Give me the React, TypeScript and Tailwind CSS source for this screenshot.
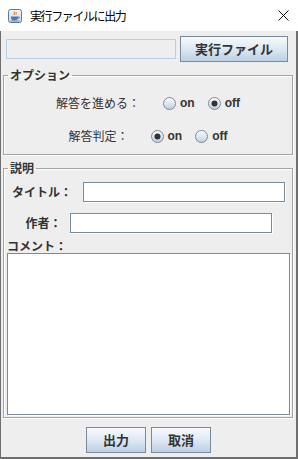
import React from "react"

function JavaIcon() {
  return (
    <svg width="14" height="14" viewBox="0 0 14 14" className="ml-[8px]">
      <defs>
        <linearGradient id="jbg" x1="0" y1="0" x2="0" y2="1">
          <stop offset="0" stopColor="#f4f7fb" />
          <stop offset="1" stopColor="#c9d7e6" />
        </linearGradient>
      </defs>
      <rect x="0.5" y="0.5" width="13" height="13" rx="2" fill="url(#jbg)" stroke="#5a7898" />
      <path d="M6 2.5c1.5 1-1 2 0.5 3.5M8 3c1 0.8-0.8 1.6 0.3 2.6" stroke="#e0642a" strokeWidth="1" fill="none" />
      <path d="M3 7.5h7v1.2c0 1.6-1.4 2.6-3.5 2.6S3 10.3 3 8.7z" fill="#4a78b0" />
      <path d="M10 8h1.2v1.2H10" stroke="#4a78b0" strokeWidth="0.8" fill="none" />
      <path d="M2.5 12h9" stroke="#4a78b0" strokeWidth="0.8" />
    </svg>
  )
}

function Radio({ checked, label }: { checked?: boolean; label: string }) {
  return (
    <div className="flex items-center gap-[4px]">
      <svg width="13" height="13" viewBox="0 0 13 13">
        <defs>
          <linearGradient id="rg" x1="0" y1="0" x2="0" y2="1">
            <stop offset="0" stopColor="#ffffff" />
            <stop offset="1" stopColor="#bccfe3" />
          </linearGradient>
        </defs>
        <circle cx="6.5" cy="6.5" r="6" fill="url(#rg)" stroke="#7d8a96" />
        {checked && <circle cx="6.5" cy="6.5" r="3" fill="#333333" />}
      </svg>
      <span className="font-['Liberation_Sans',sans-serif] font-bold text-[12px] leading-[14px] text-[#333333]">
        {label}
      </span>
    </div>
  )
}

function Button({ children, className }: { children: React.ReactNode; className?: string }) {
  return (
    <button
      className={
        "h-[26px] flex items-center justify-center border border-[#7a8a99] bg-linear-to-b from-[#f8fafd] via-[#dde8f3] to-[#bcd0e5] text-[13px] leading-[16px] font-bold text-[#333333] " +
        (className ?? "")
      }
    >
      {children}
    </button>
  )
}

export default function App() {
  return (
    <div className="w-[298px] h-[459px] flex flex-col bg-white font-['Noto_Sans_CJK_JP',sans-serif] text-[#333333] overflow-hidden">
      {/* タイトルバー */}
      <div className="h-[31px] shrink-0 flex items-center">
        <JavaIcon />
        <span className="ml-[8px] text-[12px] leading-[16px] text-black tracking-[-1.4px]">
          実行ファイルに出力
        </span>
        <svg className="ml-auto mr-[9px]" width="11" height="11" viewBox="0 0 11 11">
          <path d="M0.5 0.5L10.5 10.5M10.5 0.5L0.5 10.5" stroke="#111" strokeWidth="1" />
        </svg>
      </div>

      <div className="flex-1 flex flex-col bg-[#eeeeee] border-l border-r-2 border-b-2 border-[#6f6f6f]">
        <div className="flex items-center gap-[4px] pl-[5px] pr-[8px] pt-[5px]">
          <div className="w-[170px] h-[20px] border border-[#b8cfe5] bg-[#eeeeee]" />
          <Button className="w-[108px]">実行ファイル</Button>
        </div>

        {/* オプション */}
        <fieldset className="ml-[2px] mr-[3px] mt-[6px] border border-[#a3a3a3] shadow-[inset_1px_1px_0_#fff,1px_1px_0_#fff] pt-[11px] pb-[8px] flex flex-col gap-[13px]">
          <legend className="ml-[4px] px-[2px] text-[12px] leading-[14px] font-bold">オプション</legend>
          <div className="h-[20px] flex items-center justify-center">
            <span className="text-[12px] leading-[14px]">解答を進める：</span>
            <div className="ml-[23px]">
              <Radio label="on" />
            </div>
            <div className="ml-[13px]">
              <Radio checked label="off" />
            </div>
          </div>
          <div className="h-[20px] flex items-center justify-center">
            <span className="text-[12px] leading-[14px]">解答判定：</span>
            <div className="ml-[22px]">
              <Radio checked label="on" />
            </div>
            <div className="ml-[13px]">
              <Radio label="off" />
            </div>
          </div>
        </fieldset>

        {/* 説明 */}
        <fieldset className="ml-[2px] mr-[3px] mt-[6px] border border-[#a3a3a3] shadow-[inset_1px_1px_0_#fff,1px_1px_0_#fff] pt-[7px] pb-[2px] pl-[3px] pr-[2px] flex flex-col">
          <legend className="ml-[1px] px-[2px] text-[12px] leading-[14px] font-bold">説明</legend>
          <div className="h-[20px] flex items-center justify-center">
            <span className="text-[12px] leading-[14px] font-bold">タイトル：</span>
            <div className="ml-[11px] w-[202px] h-[20px] bg-white border border-[#7a8a99] shadow-[1px_1px_0_#fff]" />
          </div>
          <div className="mt-[11px] h-[20px] flex items-center justify-center">
            <span className="text-[12px] leading-[14px] font-bold">作者：</span>
            <div className="ml-[8px] w-[202px] h-[20px] bg-white border border-[#7a8a99] shadow-[1px_1px_0_#fff]" />
          </div>
          <div className="mt-[6px] text-[12px] leading-[14px] font-bold">コメント：</div>
          <div className="h-[162px] bg-white border border-[#7a8a99] shadow-[1px_1px_0_#fff]" />
        </fieldset>

        <div className="mt-[9px] flex justify-center gap-[5px]">
          <Button className="w-[60px]">出力</Button>
          <Button className="w-[60px]">取消</Button>
        </div>
      </div>
    </div>
  )
}
